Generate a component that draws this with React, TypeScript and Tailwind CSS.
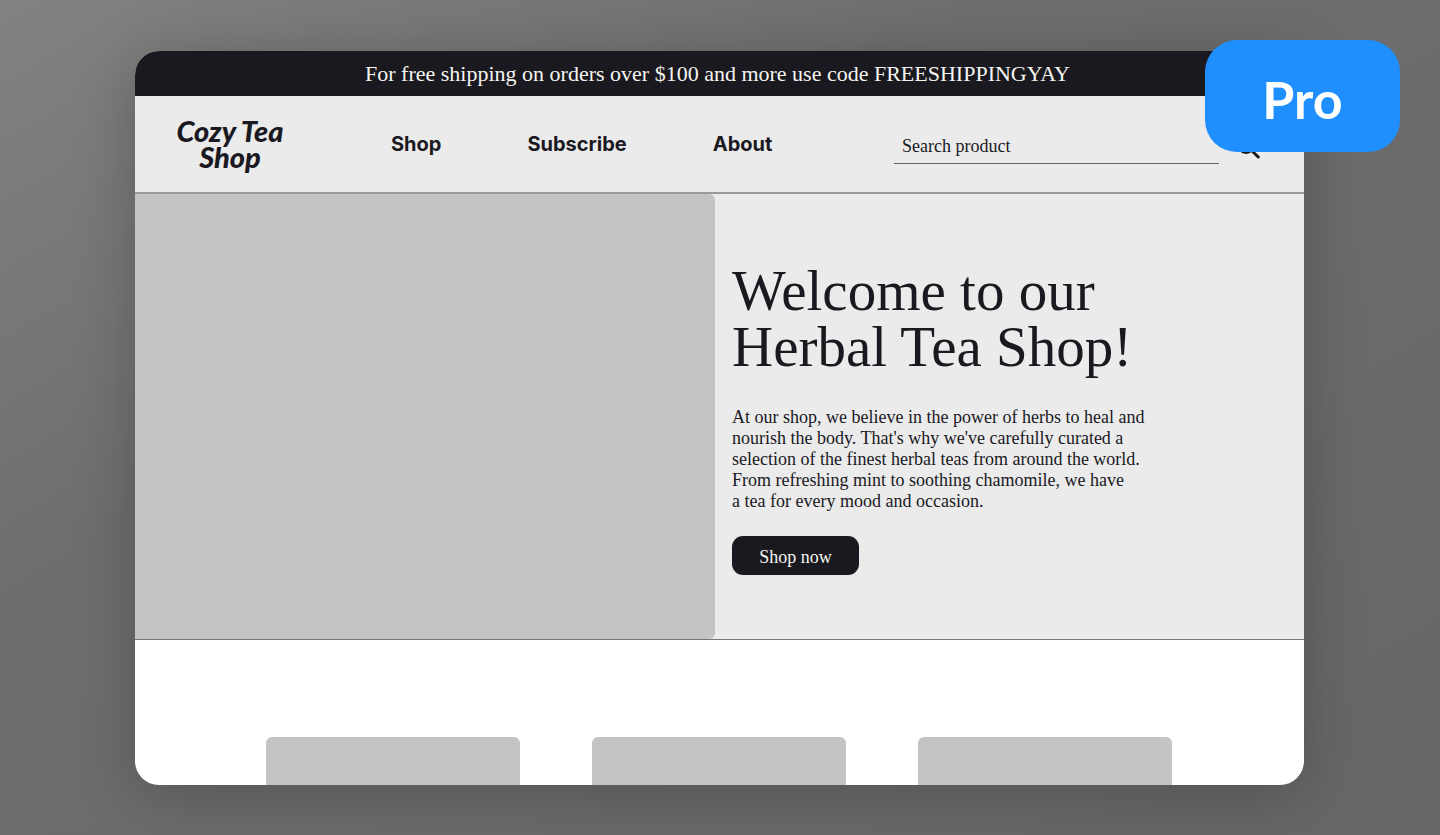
const navItems = ["Shop", "Subscribe", "About"];
const products = ["Product one", "Product two", "Product three"];

function Banner() {
  return (
    <p className="flex h-[45px] items-center justify-center bg-[#1a191f] pr-1 text-[22px] leading-6 text-[#f5f5f0]">
      For free shipping on orders over $100 and more use code FREESHIPPINGYAY
    </p>
  );
}

function SearchIcon() {
  return (
    <svg
      viewBox="0 0 24 24"
      className="size-6"
      fill="none"
      stroke="currentColor"
      strokeWidth="3"
      strokeLinecap="round"
      aria-hidden="true"
    >
      <circle cx="9" cy="10" r="7.5" />
      <path d="M14.5 15.5L21.3 22" />
    </svg>
  );
}

function Header() {
  return (
    <header className="flex h-[98px] items-center border-b-2 border-[#999999] pl-8 pr-[43px]">
      <a
        href="#home"
        className="w-[126px] text-center font-['Lato',sans-serif] text-[29px] font-black italic leading-[26px]"
      >
        Cozy Tea Shop
      </a>
      <nav className="ml-[98px] flex gap-[86px] font-['Inter',sans-serif] text-[20px] font-bold leading-6">
        {navItems.map((item) => (
          <a key={item} href={`#${item.toLowerCase()}`}>
            {item}
          </a>
        ))}
      </nav>
      <form className="ml-auto flex items-center gap-[18px] pt-1.5">
        <input
          type="search"
          aria-label="Search product"
          placeholder="Search product"
          className="h-[34px] w-[325px] border-b border-[#666666] bg-transparent px-2 text-[18px] outline-none placeholder:text-[#1a191f]"
        />
        <button type="button" aria-label="Search">
          <SearchIcon />
        </button>
      </form>
    </header>
  );
}

function Hero() {
  return (
    <section className="flex h-[446px] border-b border-[#777777]">
      <div className="w-[580px] rounded-r-md bg-[#c4c4c4]" />
      <div className="flex flex-1 flex-col items-start pl-[17px] pt-[69px]">
        <h1 className="max-w-[430px] text-[57px] leading-[56px]">Welcome to our Herbal Tea Shop!</h1>
        <p className="mt-8 w-[424px] text-[18px] leading-[21px]">
          At our shop, we believe in the power of herbs to heal and nourish the body. That's why we've
          carefully curated a selection of the finest herbal teas from around the world. From refreshing
          mint to soothing chamomile, we have a&nbsp;tea for every mood and occasion.
        </p>
        <button
          type="button"
          className="mt-6 h-[39px] w-[127px] rounded-[11px] bg-[#1a191f] pt-1 text-[18px] text-[#f5f5f0]"
        >
          Shop now
        </button>
      </div>
    </section>
  );
}

export default function App() {
  return (
    <div className="relative min-h-screen bg-linear-to-br from-[#808380] via-[#6e6e6e] via-35% to-[#666666] pb-[50px] pl-[135px] pr-[136px] pt-[51px]">
      <main className="overflow-hidden rounded-3xl bg-white font-['Liberation_Serif',serif] text-[#1a191f] shadow-[0_8px_60px_rgba(0,0,0,0.22)]">
        <Banner />
        <div className="bg-[#ebebeb]">
          <Header />
          <Hero />
        </div>
        <section className="flex justify-center gap-[72px] pr-0.5 pt-[97px]">
          {products.map((product) => (
            <div key={product} className="h-12 w-[254px] rounded-t-md bg-[#c4c4c4]" />
          ))}
        </section>
      </main>
      <div className="absolute right-10 top-10 flex h-28 w-[195px] items-center justify-center rounded-[32px] bg-[#1f8fff] pt-1.5 font-['Lato',sans-serif] text-[52px] font-bold text-white">
        Pro
      </div>
    </div>
  );
}
